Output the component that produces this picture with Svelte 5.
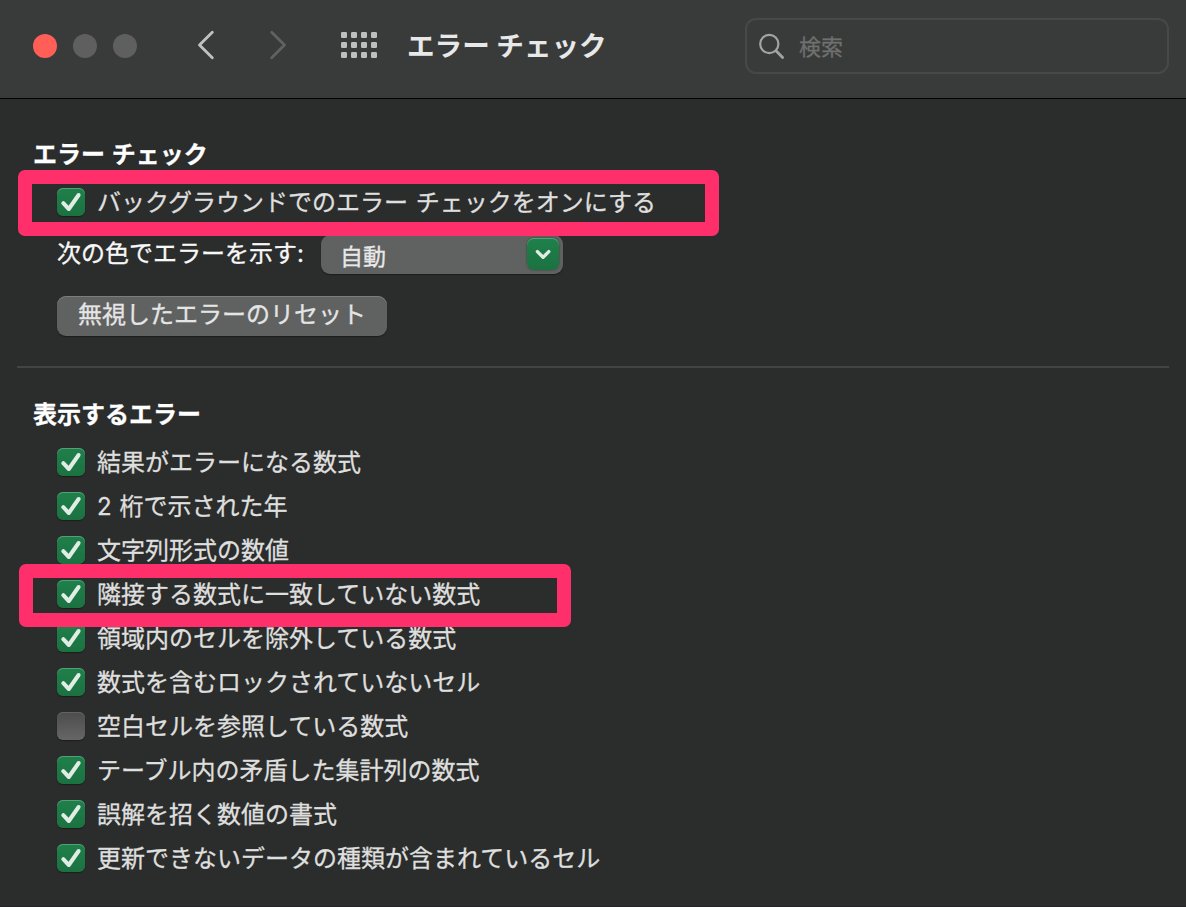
<script>
  let checkBackground = true;

  let rules = [
    { label: '結果がエラーになる数式', on: true },
    { label: '2 桁で示された年', on: true },
    { label: '文字列形式の数値', on: true },
    { label: '隣接する数式に一致していない数式', on: true, marked: true },
    { label: '領域内のセルを除外している数式', on: true },
    { label: '数式を含むロックされていないセル', on: true },
    { label: '空白セルを参照している数式', on: false },
    { label: 'テーブル内の矛盾した集計列の数式', on: true },
    { label: '誤解を招く数値の書式', on: true },
    { label: '更新できないデータの種類が含まれているセル', on: true }
  ];

  const dots = Array.from({ length: 12 }, (_, i) => ({ x: (i % 4) * 10, y: Math.floor(i / 4) * 10 }));
</script>

{#snippet tick(on)}
  <span class="box" class:on>
    {#if on}
      <svg width="28" height="28" viewBox="0 0 28 28">
        <path d="M6.3 15.2 L11.8 21 L21.6 7" />
      </svg>
    {/if}
  </span>
{/snippet}

<div class="window">
  <header>
    <div class="lights">
      <span class="light close"></span>
      <span class="light"></span>
      <span class="light"></span>
    </div>
    <svg class="chevron" width="18" height="30" viewBox="0 0 18 30">
      <path d="M15.3 2.3 L2.5 15 L15.3 27.7" />
    </svg>
    <svg class="chevron next" width="18" height="30" viewBox="0 0 18 30">
      <path d="M2.7 2.3 L15.5 15 L2.7 27.7" />
    </svg>
    <svg class="grid" width="36" height="26" viewBox="0 0 36 26">
      {#each dots as dot}
        <rect x={dot.x} y={dot.y} width="6" height="6" rx="1.2" />
      {/each}
    </svg>
    <h1>エラー チェック</h1>
    <div class="search">
      <svg width="28" height="28" viewBox="0 0 28 28">
        <circle cx="11.3" cy="12" r="9.1" />
        <path d="M18 18.8 L24.6 25.6" />
      </svg>
      <span class="placeholder">検索</span>
    </div>
  </header>

  <main>
    <section class="general">
      <h2>エラー チェック</h2>
      <label class="row">
        <input type="checkbox" bind:checked={checkBackground} />
        {@render tick(checkBackground)}
        <span class="text">バックグラウンドでのエラー チェックをオンにする</span>
        <span class="mark mark-background"></span>
      </label>
      <div class="color-row">
        <span class="color-label">次の色でエラーを示す:</span>
        <div class="select">
          <span>自動</span>
          <span class="arrow">
            <svg width="32" height="32" viewBox="0 0 32 32">
              <path d="M10.4 13.6 L16.1 19.3 L21.8 13.6" />
            </svg>
          </span>
        </div>
      </div>
      <button>無視したエラーのリセット</button>
    </section>

    <section class="rules">
      <h2>表示するエラー</h2>
      {#each rules as rule}
        <label class="row">
          <input type="checkbox" bind:checked={rule.on} />
          {@render tick(rule.on)}
          <span class="text">{rule.label}</span>
          {#if rule.marked}
            <span class="mark mark-rule"></span>
          {/if}
        </label>
      {/each}
    </section>
  </main>
</div>

<style>
  :global(body) {
    background: #2b2d2c;
  }

  .window {
    box-sizing: border-box;
    height: 907px;
    overflow: hidden;
    background: #2b2d2c;
    border-bottom: 1px solid #242224;
    color: #dedfde;
    font-family: Inter, "Noto Sans CJK JP", sans-serif;
    font-size: 24px;
    line-height: 44px;
    word-spacing: 1px;
    white-space: nowrap;
    -webkit-text-stroke: 0.3px currentColor;
  }

  header {
    box-sizing: border-box;
    display: flex;
    align-items: center;
    height: 99px;
    padding: 0 17px 7px 33px;
    background: #393b3a;
    border-bottom: 1px solid #000;
  }

  .lights {
    display: flex;
    gap: 16px;
    margin-right: 60px;
  }

  .light {
    width: 24px;
    height: 24px;
    border-radius: 50%;
    background: #5f5f5f;
  }

  .light.close {
    background: #ff5f57;
  }

  svg {
    display: block;
    flex: none;
    fill: none;
    stroke-linecap: round;
    stroke-linejoin: round;
  }

  .chevron {
    margin-bottom: 2px;
    stroke: #c1c1c1;
    stroke-width: 2.8;
  }

  .chevron.next {
    margin-left: 54px;
    stroke: #606160;
  }

  .grid {
    margin-left: 54px;
    margin-right: 30px;
    margin-bottom: 1px;
    fill: #bfbfbf;
  }

  h1 {
    margin: 0;
    color: #e8e8e8;
    font-size: 27.6px;
    font-weight: 700;
    word-spacing: 0;
    -webkit-text-stroke: 0;
  }

  .search {
    box-sizing: border-box;
    display: flex;
    align-items: center;
    gap: 13px;
    width: 424px;
    height: 56px;
    margin-left: auto;
    padding-left: 11px;
    border: 2px solid #474948;
    border-radius: 11px;
    color: #6e6f6e;
    font-size: 22px;
  }

  .search svg {
    stroke: #a2a3a2;
    stroke-width: 2.2;
  }

  .search path {
    stroke-width: 2.8;
  }

  .placeholder {
    padding-top: 2px;
  }

  .general {
    box-sizing: border-box;
    height: 269px;
    margin: 0 17px;
    padding: 33px 16px 0;
    border-bottom: 2px solid #434544;
  }

  h2 {
    box-sizing: border-box;
    height: 48px;
    margin: 0;
    padding-top: 1px;
    color: #fff;
    font-size: 24px;
    font-weight: 700;
    line-height: 44px;
  }

  .row {
    position: relative;
    display: flex;
    align-items: center;
    gap: 12px;
    height: 44px;
    padding-left: 24px;
  }

  .text {
    padding-top: 2px;
  }

  input {
    position: absolute;
    opacity: 0;
  }

  .box {
    width: 28px;
    height: 28px;
    border-radius: 6px;
    background: linear-gradient(#4c4c4c, #666);
    box-shadow: inset 0 1px 0 #626362, 0 1px 1px #1c1d1c;
  }

  .box.on {
    background: linear-gradient(#1f804a, #1b7241);
    box-shadow: inset 0 1px 0 #55a077, 0 1px 1px #1c1d1c;
  }

  .box path {
    stroke: #e0ede5;
    stroke-width: 4;
  }

  .mark {
    position: absolute;
    z-index: 1;
    box-sizing: border-box;
    border: 14px solid #ff2f6c;
    border-radius: 7px;
    pointer-events: none;
  }

  .mark-background {
    top: -10px;
    left: -15px;
    width: 701px;
    height: 66px;
  }

  .mark-rule {
    top: -8px;
    left: -14px;
    width: 552px;
    height: 63px;
  }

  .color-row {
    display: flex;
    gap: 15px;
    height: 61px;
    padding: 11px 0 0 24px;
    box-sizing: border-box;
  }

  .color-label {
    width: 249px;
    margin-top: -3px;
    color: #f8f8f8;
  }

  .select {
    box-sizing: border-box;
    display: flex;
    justify-content: space-between;
    width: 242px;
    height: 39px;
    padding: 3px 4px 0 19px;
    border-radius: 9px;
    background: #606261;
    box-shadow: 0 1px 1px #1c1d1c;
    color: #e8e8e8;
    font-size: 23px;
    line-height: 38px;
  }

  .arrow {
    width: 32px;
    height: 32px;
    border-radius: 7px;
    background: linear-gradient(#1f804a, #1b7241);
    box-shadow: inset 0 1px 0 #55a077, 0 0 2px #333;
  }

  .arrow path {
    stroke: #e0ede5;
    stroke-width: 3.4;
  }

  button {
    display: block;
    width: 330px;
    height: 40px;
    margin: 11px 0 0 24px;
    padding: 0 0 3px;
    border: 0;
    border-radius: 9px;
    background: #606261;
    box-shadow: inset 0 1px 0 #7c7d7c, 0 1px 1px #1c1d1c;
    color: #e5e5e5;
    font: inherit;
    line-height: 37px;
  }

  .rules {
    padding: 24px 33px 0;
  }
</style>
